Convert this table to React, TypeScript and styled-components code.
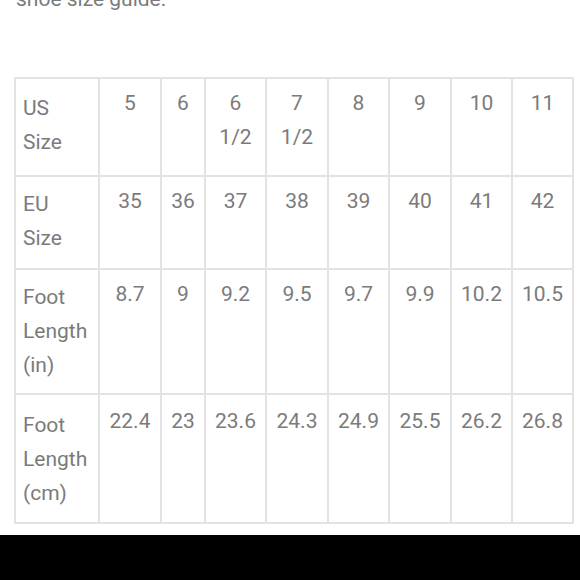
import React from 'react'
import styled, { createGlobalStyle } from 'styled-components'

const GlobalStyle = createGlobalStyle`
  html, body {
    margin: 0;
    padding: 0;
    background: #ffffff;
  }
  body {
    font-family: Roboto, "Noto Sans", "Liberation Sans", sans-serif;
  }
`

type Row = {
  label: string[]
  values: string[][]
  height: number
  valueTop: number
  labelTop: number
}

const columnWidths = [84, 62, 44, 61, 62, 61, 62, 61, 61]

const rows: Row[] = [
  {
    label: ['US', 'Size'],
    values: [['5'], ['6'], ['6', '1/2'], ['7', '1/2'], ['8'], ['9'], ['10'], ['11']],
    height: 98,
    valueTop: 7,
    labelTop: 12,
  },
  {
    label: ['EU', 'Size'],
    values: [['35'], ['36'], ['37'], ['38'], ['39'], ['40'], ['41'], ['42']],
    height: 93,
    valueTop: 7,
    labelTop: 10,
  },
  {
    label: ['Foot', 'Length', '(in)'],
    values: [['8.7'], ['9'], ['9.2'], ['9.5'], ['9.7'], ['9.9'], ['10.2'], ['10.5']],
    height: 125,
    valueTop: 7,
    labelTop: 10,
  },
  {
    label: ['Foot', 'Length', '(cm)'],
    values: [['22.4'], ['23'], ['23.6'], ['24.3'], ['24.9'], ['25.5'], ['26.2'], ['26.8']],
    height: 129,
    valueTop: 9,
    labelTop: 13,
  },
]

const App = () => {
  return (<S.Page>
    <GlobalStyle />
    <S.Content>
      <S.Intro>shoe size guide.</S.Intro>
      <S.Table>
        <colgroup>
          {columnWidths.map((w, i) => <col key={i} style={{ width: w }} />)}
        </colgroup>
        <tbody>
          {
            rows.map(row =>
              <S.Row key={row.label.join(' ')} height={row.height}>
                <S.LabelCell top={row.labelTop}>
                  {row.label.map(line => <S.Line key={line}>{line}</S.Line>)}
                </S.LabelCell>
                {
                  row.values.map((value, i) =>
                    <S.ValueCell key={i} top={row.valueTop}>
                      {value.map(line => <S.Line key={line}>{line}</S.Line>)}
                    </S.ValueCell>
                  )
                }
              </S.Row>
            )
          }
        </tbody>
      </S.Table>
    </S.Content>
    <S.BottomBar />
  </S.Page>)
}

export default App

const S = {
  Page: styled.div`
    height: 100vh;
    display: flex;
    flex-direction: column;
    overflow: hidden;
    background: #ffffff;
  `,
  Content: styled.div`
    flex: 1;
    padding: 0 14px;
    overflow: hidden;
  `,
  Intro: styled.p`
    margin: -16px 0 0 2px;
    font-size: 21px;
    line-height: 30px;
    color: #7b7b7b;
  `,
  Table: styled.table`
    margin-top: 63px;
    width: 558px;
    table-layout: fixed;
    border-collapse: collapse;
    color: #7b7b7b;
    font-size: 21px;
    line-height: 34px;
  `,
  Row: styled.tr<{ height: number }>`
    height: ${props => props.height}px;
  `,
  LabelCell: styled.td<{ top: number }>`
    border: 2px solid #e3e3e3;
    padding: ${props => props.top}px 0 0 7px;
    vertical-align: top;
    text-align: left;
  `,
  ValueCell: styled.td<{ top: number }>`
    border: 2px solid #e3e3e3;
    padding: ${props => props.top}px 0 0 0;
    vertical-align: top;
    text-align: center;
    white-space: nowrap;
  `,
  Line: styled.div`
    display: block;
  `,
  BottomBar: styled.div`
    height: 45px;
    flex-shrink: 0;
    background: #000000;
  `,
}
